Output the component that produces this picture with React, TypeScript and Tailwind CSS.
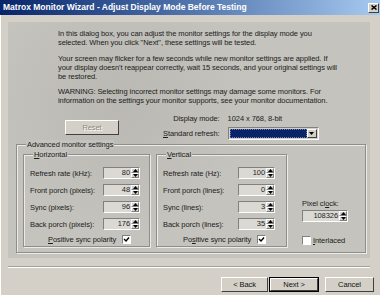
import React from 'react';

const font = "font-['Liberation_Sans',Arial,sans-serif]";

const SpinButtons = () => (
  <div className="flex w-[8px] flex-col">
    <div className="flex h-[5px] items-center justify-center border-t border-l border-t-white border-l-white border-r border-b border-r-[#808080] border-b-[#808080] bg-[#d4d0c8]">
      <svg width="5" height="3" viewBox="0 0 5 3"><path d="M2.5 0 L5 3 L0 3 Z" fill="#000" /></svg>
    </div>
    <div className="flex h-[5px] items-center justify-center border-t border-l border-t-white border-l-white border-r border-b border-r-[#808080] border-b-[#808080] bg-[#d4d0c8]">
      <svg width="5" height="3" viewBox="0 0 5 3"><path d="M0 0 L5 0 L2.5 3 Z" fill="#000" /></svg>
    </div>
  </div>
);

const Spin = ({ value, wide }: { value: string; wide?: boolean }) => (
  <div
    className={`flex h-[12px] ${wide ? 'w-[46px]' : 'w-[37px]'} border border-t-[#808080] border-l-[#808080] border-b-white border-r-white bg-[#dbd9d3]`}
  >
    <span className="flex-1 pr-[1px] text-right leading-[10px]">{value}</span>
    <SpinButtons />
  </div>
);

const Check = ({ checked }: { checked?: boolean }) => (
  <div className="flex h-[9px] w-[9px] items-center justify-center border border-t-[#808080] border-l-[#808080] border-b-white border-r-white bg-white">
    {checked && (
      <svg width="7" height="7" viewBox="0 0 7 7">
        <path d="M1 3 L3 5 L6 1.5" stroke="#000" strokeWidth="1.4" fill="none" />
      </svg>
    )}
  </div>
);

const Row = ({ label, value }: { label: string; value: string }) => (
  <div className="flex items-center justify-between">
    <span>{label}</span>
    <Spin value={value} />
  </div>
);

const Button = ({ children, w, focus, disabled }: { children: React.ReactNode; w: string; focus?: boolean; disabled?: boolean }) => (
  <div className={`${w} h-[15px] ${focus ? 'border border-black' : ''}`}>
    <div className="flex h-full items-center justify-center border border-t-white border-l-white border-r-[#404040] border-b-[#404040] bg-[#d4d0c8]">
      <span className={disabled ? 'text-[#8a8984] [text-shadow:1px_1px_0_#fff]' : 'text-[#111]'}>{children}</span>
    </div>
  </div>
);

export default function App() {
  return (
    <div className={`${font} flex h-[295px] w-[380px] flex-col overflow-hidden bg-[#d4d0c8] text-[7.5px] leading-[9px] tracking-[-0.08px] text-[#1c1c1c]`}>
      {/* title bar */}
      <div className="flex h-[15px] items-center justify-between bg-gradient-to-r from-[#0a246a] to-[#a6caf0] pl-[3px] pr-[1px]">
        <span className="text-[8.5px] font-bold tracking-[0px] text-white">
          Matrox Monitor Wizard - Adjust Display Mode Before Testing
        </span>
        <div className="flex h-[10px] w-[11px] items-center justify-center border border-t-white border-l-white border-r-[#404040] border-b-[#404040] bg-[#d4d0c8]">
          <svg width="6" height="5" viewBox="0 0 6 5">
            <path d="M0.5 0.5 L5.5 4.5 M5.5 0.5 L0.5 4.5" stroke="#000" strokeWidth="1.5" />
          </svg>
        </div>
      </div>

      <div className="flex flex-1 flex-col border-l border-l-white pl-[7px] pr-[10px] pt-[7px]">
        {/* main panel */}
        <div className="flex h-[236px] flex-col bg-[#c4c3bd] bg-[radial-gradient(circle_at_30%_35%,#b9b8b2_0%,#c4c3bd_45%)]">
          <div className="flex flex-col gap-[6px] pl-[50px] pt-[7px]">
            <p>
              In this dialog box, you can adjust the monitor settings for the display mode you<br />
              selected. When you click "Next", these settings will be tested.
            </p>
            <p className="mt-[1px]">
              Your screen may flicker for a few seconds while new monitor settings are applied. If<br />
              your display doesn't reappear correctly, wait 15 seconds, and your original settings will<br />
              be restored.
            </p>
            <p>
              WARNING: Selecting incorrect monitor settings may damage some monitors. For<br />
              information on the settings your monitor supports, see your monitor documentation.
            </p>
          </div>

          <div className="mt-[9px] flex">
            <div className="ml-[57px] mt-[6px]">
              <Button w="w-[54px]" disabled>Reset</Button>
            </div>
            <div className="ml-[44px] grid grid-cols-[auto_auto] items-center gap-x-[8px] gap-y-[4px]">
              <span className="text-right">Display mode:</span>
              <span>1024 x 768, 8-bit</span>
              <span className="text-right">
                <span className="underline">S</span>tandard refresh:
              </span>
              <div className="flex h-[13px] w-[91px] border border-t-[#808080] border-l-[#808080] border-b-white border-r-white bg-[#d4d0c8] p-[1px]">
                <div className="flex-1 bg-[#0a246a] outline outline-1 outline-dotted outline-[#6c7fb0] -outline-offset-1" />
                <div className="flex w-[10px] items-center justify-center border border-t-white border-l-white border-r-[#404040] border-b-[#404040] bg-[#d4d0c8]">
                  <svg width="5" height="3" viewBox="0 0 5 3"><path d="M0 0 L5 0 L2.5 3 Z" fill="#000" /></svg>
                </div>
              </div>
            </div>
          </div>

          {/* advanced settings */}
          <fieldset className="ml-[8px] mr-[4px] flex h-[113px] border border-[#8f8e89] px-[6px] pt-[1px] shadow-[inset_1px_1px_0_#ecebe7,1px_1px_0_#ecebe7]">
            <legend className="ml-[3px] bg-[#c4c3bd] px-[1px]">Advanced monitor settings</legend>
            <div className="flex gap-[6px]">
              <fieldset className="h-[97px] w-[127px] border border-[#8f8e89] pl-[6px] pr-[9px] pt-[8px] shadow-[inset_1px_1px_0_#ecebe7,1px_1px_0_#ecebe7]">
                <legend className="ml-[3px] bg-[#c4c3bd] px-[1px]">
                  <span className="underline">H</span>orizontal
                </legend>
                <div className="flex flex-col gap-[5px]">
                  <Row label="Refresh rate (kHz):" value="80" />
                  <Row label="Front porch (pixels):" value="48" />
                  <Row label="Sync (pixels):" value="96" />
                  <Row label="Back porch (pixels):" value="176" />
                  <div className="flex items-center gap-[6px] pl-[18px]">
                    <span>
                      <span className="underline">P</span>ositive sync polarity
                    </span>
                    <Check checked />
                  </div>
                </div>
              </fieldset>
              <fieldset className="h-[97px] w-[131px] border border-[#8f8e89] pl-[6px] pr-[11px] pt-[8px] shadow-[inset_1px_1px_0_#ecebe7,1px_1px_0_#ecebe7]">
                <legend className="ml-[3px] bg-[#c4c3bd] px-[1px]">
                  <span className="underline">V</span>ertical
                </legend>
                <div className="flex flex-col gap-[5px]">
                  <Row label="Refresh rate (Hz):" value="100" />
                  <Row label="Front porch (lines):" value="0" />
                  <Row label="Sync (lines):" value="3" />
                  <Row label="Back porch (lines):" value="35" />
                  <div className="flex items-center gap-[6px] pl-[20px]">
                    <span>
                      Po<span className="underline">s</span>itive sync polarity
                    </span>
                    <Check checked />
                  </div>
                </div>
              </fieldset>
              <div className="ml-[9px] flex flex-col pt-[49px]">
                <span>
                  Pixel cl<span className="underline">o</span>ck:
                </span>
                <div className="mt-[2px]">
                  <Spin value="108326" wide />
                </div>
                <div className="mt-[14px] flex items-center gap-[2px]">
                  <Check />
                  <span>
                    <span className="underline">I</span>nterlaced
                  </span>
                </div>
              </div>
            </div>
          </fieldset>
        </div>

        {/* separator */}
        <div className="mt-[8px] h-[2px] border-t border-t-[#a09f9a] border-b border-b-white" />

        {/* buttons */}
        <div className="mt-[9px] flex justify-end">
          <Button w="w-[47px]">&lt; Back</Button>
          <div className="ml-[1px]">
            <Button w="w-[50px]" focus>Next &gt;</Button>
          </div>
          <div className="ml-[6px] mr-[-4px]">
            <Button w="w-[49px]">Cancel</Button>
          </div>
        </div>
      </div>
    </div>
  );
}
